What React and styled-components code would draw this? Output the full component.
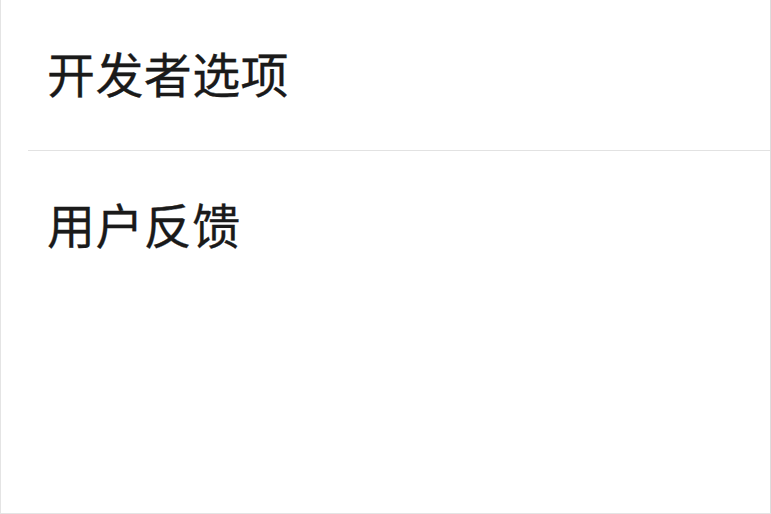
import React from "react";
import styled, { createGlobalStyle } from "styled-components";

const Global = createGlobalStyle`
  html, body { margin: 0; padding: 0; background: #fff; }
  #root { width: 771px; height: 514px; }
`;

const Frame = styled.div`
  box-sizing: border-box;
  width: 771px;
  height: 514px;
  background: #fff;
  border-left: 1px solid #e4e4e4;
  border-right: 1px solid #dcdcdc;
  border-bottom: 1px solid #e4e4e4;
  padding-left: 27px;
  display: flex;
  flex-direction: column;
`;

const Row = styled.div`
  box-sizing: border-box;
  height: ${(p) => p.$h}px;
  display: flex;
  align-items: center;
  padding-left: 19px;
  padding-bottom: ${(p) => p.$lift}px;
  border-bottom: ${(p) => (p.$divider ? "1px solid #e2e2e2" : "none")};
  font-family: "Noto Sans CJK SC", "Noto Sans", sans-serif;
  font-size: 48px;
  letter-spacing: 0.4px;
  color: #1a1a1a;
  line-height: 1;
  -webkit-text-stroke: 0.3px #1a1a1a;
`;

export default function App() {
  return (
    <>
      <Global />
      <Frame>
        <Row $h={151} $lift={6} $divider>开发者选项</Row>
        <Row $h={154} $lift={10}>用户反馈</Row>
      </Frame>
    </>
  );
}
